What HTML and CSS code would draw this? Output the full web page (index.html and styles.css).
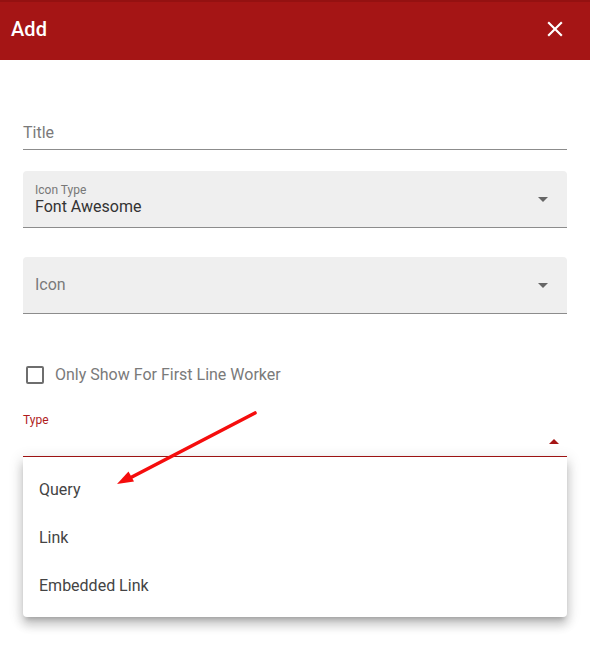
FILE: index.html
```html
<!DOCTYPE html>
<html lang="en">
<head>
<meta charset="utf-8">
<title>Add</title>
<link rel="stylesheet" href="styles.css">
</head>
<body>
<div class="dialog">
  <header class="bar">
    <h1 class="bar-title">Add</h1>
    <button class="close" aria-label="Close">
      <svg width="26" height="26" viewBox="0 0 24 24"><path d="M19 6.41L17.59 5 12 10.59 6.41 5 5 6.41 10.59 12 5 17.59 6.41 19 12 13.41 17.59 19 19 17.59 13.41 12z" fill="#fff"/></svg>
    </button>
  </header>
  <form class="form">
    <div class="field-plain">
      <span class="placeholder">Title</span>
    </div>
    <div class="field-fill">
      <div class="fill-text fill-text-shift">
        <span class="fill-label">Icon Type</span>
        <span class="fill-value">Font Awesome</span>
      </div>
      <span class="caret-down"></span>
    </div>
    <div class="field-fill field-icon">
      <div class="fill-text">
        <span class="placeholder">Icon</span>
      </div>
      <span class="caret-down"></span>
    </div>
    <label class="check-row">
      <span class="check-box"></span>
      <span class="check-label">Only Show For First Line Worker</span>
    </label>
    <div class="field-type">
      <span class="type-label">Type</span>
      <div class="type-input"><span class="caret-up"></span></div>
    </div>
  </form>
  <div class="menu">
    <div class="menu-item">Query</div>
    <div class="menu-item">Link</div>
    <div class="menu-item">Embedded Link</div>
  </div>
  <svg class="annot" width="590" height="672" viewBox="0 0 590 672">
    <line x1="255" y1="413" x2="128" y2="479" stroke="#f50d0d" stroke-width="3.6" stroke-linecap="round"/>
    <polygon points="117,484 134,481.5 128.5,471.5" fill="#f50d0d"/>
  </svg>
</div>
</body>
</html>
```
FILE: styles.css
```css
* { box-sizing: border-box; }
html, body { margin: 0; padding: 0; background: #fff; }
body {
  font-family: Roboto, "Noto Sans", Arial, sans-serif;
  width: 590px;
  height: 672px;
  overflow: hidden;
}
.dialog { position: relative; width: 590px; height: 672px; }
.bar {
  height: 60px;
  background: #a51515;
  border-top: 2px solid #941111;
  display: flex;
  align-items: center;
  justify-content: space-between;
  padding: 0 22px 4px 11px;
}
.bar-title {
  margin: 0;
  font-size: 20px;
  font-weight: 500;
  color: #fff;
  line-height: 24px;
  letter-spacing: 0.1px;
}
.close {
  border: 0;
  background: none;
  padding: 0;
  width: 26px;
  height: 26px;
  display: flex;
  margin-top: 0;
}
.close svg { width: 26px; height: 26px; }
.form {
  padding: 63px 23px 0 23px;
  display: flex;
  flex-direction: column;
}
.placeholder {
  font-size: 16px;
  color: #7a7a7a;
  line-height: 20px;
}
.field-plain {
  padding-bottom: 6px;
  border-bottom: 1px solid #8c8c8c;
  display: flex;
}
.field-fill {
  margin-top: 21px;
  height: 57px;
  background: #efefef;
  border-radius: 4px 4px 0 0;
  border-bottom: 1px solid #8c8c8c;
  display: flex;
  align-items: center;
  justify-content: space-between;
  padding: 0 19px 0 12px;
}
.field-icon { margin-top: 29px; }
.fill-text { display: flex; flex-direction: column; }
.fill-text-shift { padding-top: 1px; }
.fill-label {
  font-size: 12px;
  line-height: 14px;
  color: #777;
}
.fill-value {
  font-size: 16px;
  line-height: 20px;
  color: #333;
}
.caret-down {
  width: 0; height: 0;
  border-left: 5px solid transparent;
  border-right: 5px solid transparent;
  border-top: 5px solid #666;
}
.caret-up {
  width: 0; height: 0;
  border-left: 5px solid transparent;
  border-right: 5px solid transparent;
  border-bottom: 5px solid #a51515;
}
.check-row {
  margin-top: 52px;
  display: flex;
  align-items: center;
  gap: 11px;
  height: 18px;
  padding-left: 3px;
}
.check-box {
  width: 18px;
  height: 18px;
  border: 2px solid #6e6e6e;
  border-radius: 2px;
}
.check-label {
  font-size: 16px;
  color: #7a7a7a;
  line-height: 20px;
}
.field-type {
  margin-top: 29px;
  display: flex;
  flex-direction: column;
}
.type-label {
  font-size: 12px;
  line-height: 14px;
  color: #b01c1c;
}
.type-input {
  height: 30px;
  border-bottom: 1px solid #a51515;
  display: flex;
  align-items: center;
  justify-content: flex-end;
  padding-right: 8px;
  padding-bottom: 1px;
}
.menu {
  position: absolute;
  left: 23px;
  top: 457px;
  width: 544px;
  background: #fff;
  border-radius: 0 0 4px 4px;
  padding: 9px 0 7px;
  box-shadow: 0 5px 5px -3px rgba(0,0,0,.2), 0 8px 10px 1px rgba(0,0,0,.14), 0 3px 14px 2px rgba(0,0,0,.12);
}
.menu-item {
  height: 48px;
  line-height: 48px;
  padding: 0 16px;
  font-size: 16px;
  color: #444;
}
.annot {
  position: absolute;
  left: 0;
  top: 0;
  pointer-events: none;
}
```
